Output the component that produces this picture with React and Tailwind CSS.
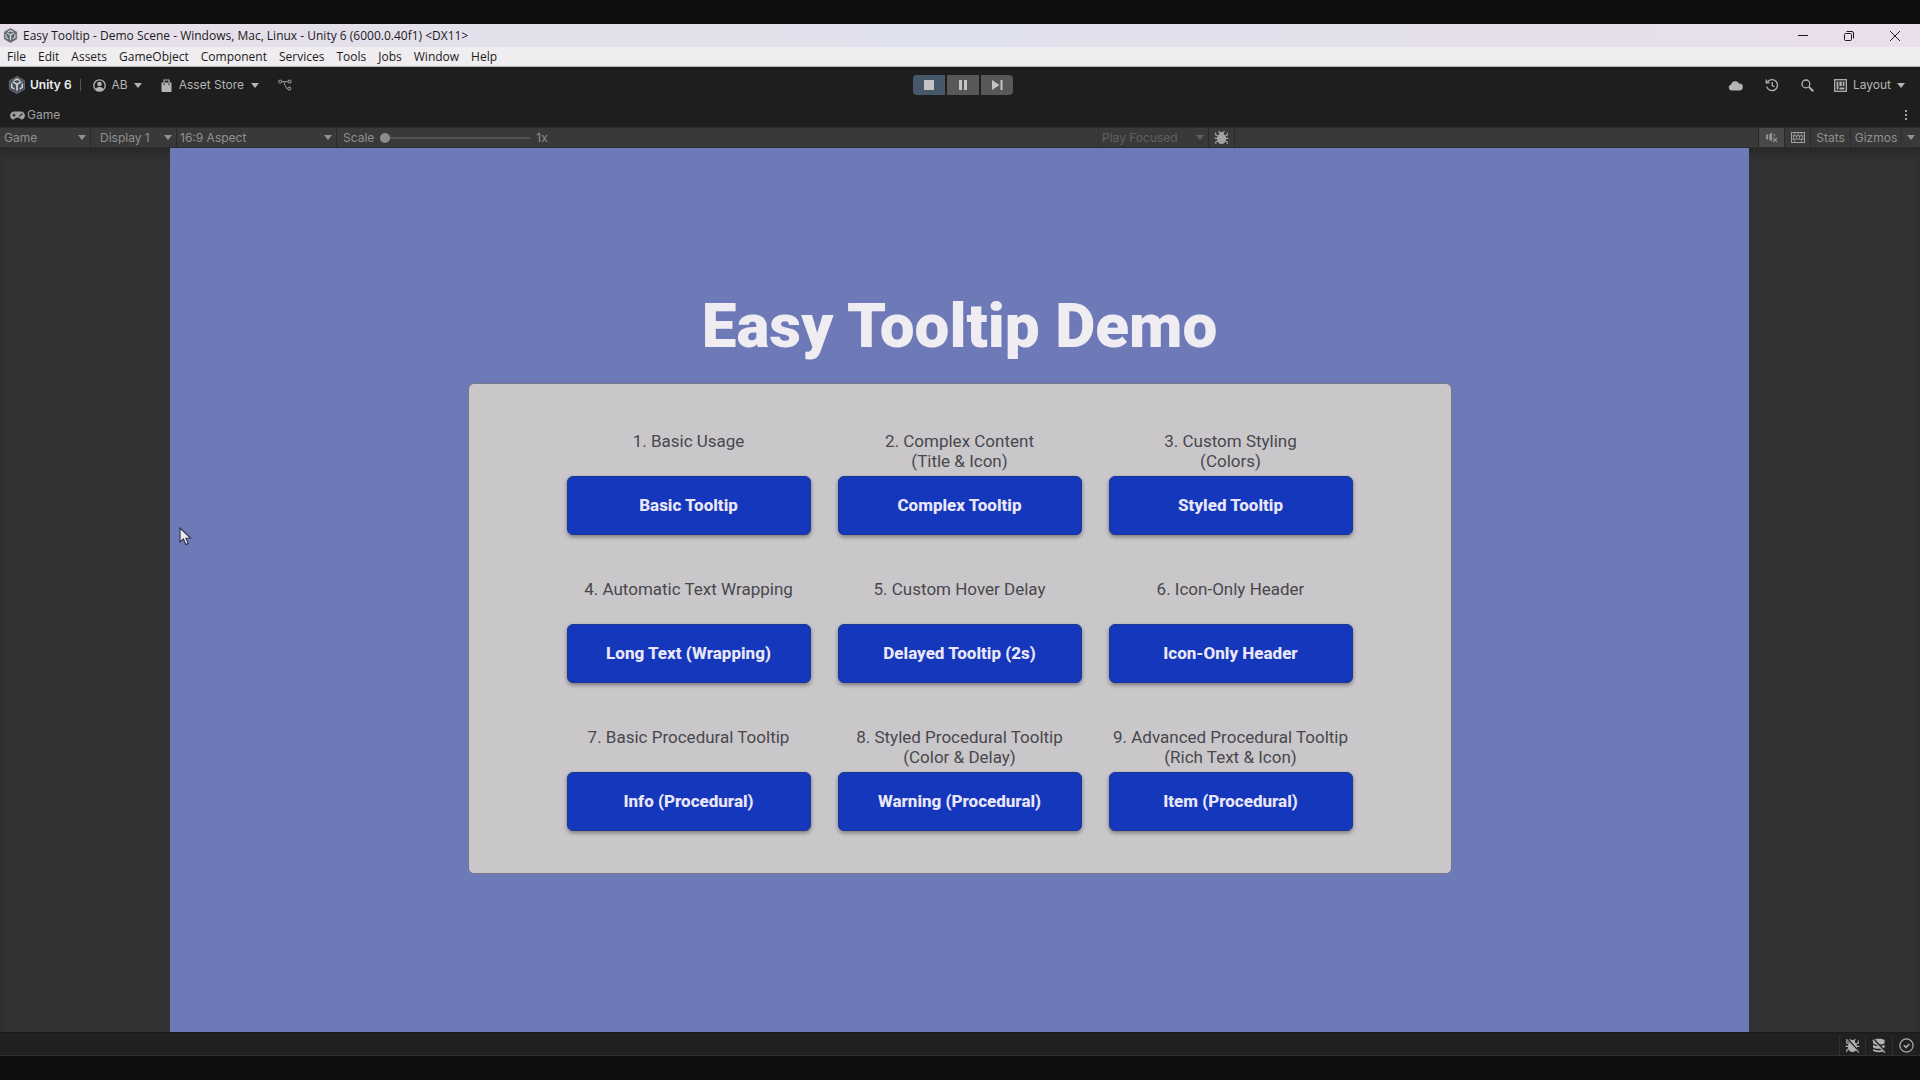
import React from "react";

const Caret = ({ className = "" }) => (
  <svg viewBox="0 0 8 5" className={`h-[5px] w-2 shrink-0 ${className}`} aria-hidden="true">
    <path d="M0 0h8L4 5z" fill="currentColor" />
  </svg>
);

const UnityCube = ({ className, face = "#4a525c", line = "#d4d8dd" }) => (
  <svg viewBox="0 0 18 18" className={className} aria-hidden="true">
    <path d="M9 .4 16.6 4.7v8.6L9 17.6 1.4 13.3V4.7z" fill={face} stroke="#7d8791" strokeWidth=".6" />
    <path d="M9 2.2 5.4 4.3l1.3.8L9 3.9l2.3 1.2 1.3-.8zM9 7.4 5.2 5.3 3.8 6.1 8.2 8.8v5l.8 1.9.8-1.9v-5l4.4-2.7-1.4-.8z" fill={line} />
    <path d="M3 7.2v4.6l3.4 2v-1.6l-2-1.2V8zM15 7.2v4.6l-3.4 2v-1.6l2-1.2V8z" fill={line} />
  </svg>
);

const UserIcon = () => (
  <svg viewBox="0 0 13 13" className="size-[13px]" aria-hidden="true">
    <circle cx="6.5" cy="6.5" r="5.7" fill="none" stroke="currentColor" strokeWidth="1.3" />
    <circle cx="6.5" cy="5" r="2.3" fill="currentColor" />
    <path d="M2.4 10.2C3.4 8.6 4.8 8 6.5 8s3.1.6 4.1 2.2a5.6 5.6 0 0 1-8.2 0z" fill="currentColor" />
  </svg>
);

const BagIcon = () => (
  <svg viewBox="0 0 11 13" className="h-[13px] w-[11px]" aria-hidden="true">
    <path d="M.5 3.6h10V12a1 1 0 0 1-1 1h-8a1 1 0 0 1-1-1z" fill="currentColor" />
    <path d="M3 3.5V1h5v2.5" fill="none" stroke="currentColor" strokeWidth="1.2" />
    <path d="M3 4.4v1.8M8 4.4v1.8" stroke="#1e1e1e" strokeWidth="1" />
  </svg>
);

const BranchIcon = () => (
  <svg viewBox="0 0 14 12" className="h-3 w-[14px]" fill="none" stroke="currentColor" strokeWidth="1.1" aria-hidden="true">
    <circle cx="2.2" cy="2.6" r="1.5" />
    <circle cx="11.6" cy="2.6" r="1.5" />
    <circle cx="11.4" cy="9.6" r="1.5" />
    <path d="M3.7 2.6h6.4M5.4 2.8c1.4 0 1.2 6.6 4.5 6.8" />
  </svg>
);

const GamepadIcon = () => (
  <svg viewBox="0 0 15 9" className="h-[9px] w-[15px]" aria-hidden="true">
    <path d="M4 .5h7a3.9 3.9 0 0 1 3.9 4C14.900 7 13.300 8.500 11.600 8.500c-1.300 0-1.800-1.700-2.700-1.700H6.100c-.9 0-1.400 1.700-2.700 1.700C1.700 8.500.1 7 .1 4.500A3.900 3.900 0 0 1 4 .5z" fill="currentColor" />
    <path d="M2.400 4.200h3.200M4 2.600v3.200" stroke="#1e1e1e" strokeWidth="1.100" />
    <path d="M9.200 5.400 12.400 2.800" stroke="#1e1e1e" strokeWidth="1.100" />
  </svg>
);

const BugIcon = ({ slashed = false, className = "size-[15px]" }) => (
  <svg viewBox="0 0 15 15" className={className} aria-hidden="true">
    <path d="M4.600 1 6 2.800M10.400 1 9 2.800M3.800 6 1.600 4.800V2.600M11.200 6l2.200-1.200V2.600M3.600 8.400H.6M11.400 8.400h3M3.800 10.800l-2 1v2.200M11.200 10.800l2 1v2.200" fill="none" stroke="currentColor" strokeWidth="1.100" />
    <ellipse cx="7.500" cy="3.800" rx="2.500" ry="2" fill="currentColor" />
    <ellipse cx="7.500" cy="8.800" rx="4.600" ry="5.300" fill="currentColor" />
    {slashed && (
      <>
        <path d="M2.200.6 14.200 14" stroke="#202020" strokeWidth="1.800" />
        <path d="M1.200 1 13.800 14.600" stroke="currentColor" strokeWidth="1.100" />
      </>
    )}
  </svg>
);

const CacheIcon = () => (
  <svg viewBox="0 0 14 15" className="h-[15px] w-[14px]" aria-hidden="true">
    <path d="M1 2.600C1 .2 12.600.2 12.600 2.600V5C12 7.200 1.600 7.200 1 5zM1 6.800c2 1.900 9.600 1.900 11.600 0v2.400c-1 2-10.600 2-11.600 0zM1 11c2 1.900 9.600 1.900 11.600 0v1.600c-1 2.200-10.600 2.200-11.600 0z" fill="currentColor" />
    <path d="M2 1.600 13.600 14" stroke="#202020" strokeWidth="1.800" />
    <path d="M.8 2 13 14.600" stroke="currentColor" strokeWidth="1.100" />
  </svg>
);

const CheckIcon = () => (
  <svg viewBox="0 0 15 15" className="size-[15px]" fill="none" stroke="currentColor" strokeWidth="1.200" aria-hidden="true">
    <circle cx="7.500" cy="7.500" r="6.600" />
    <path d="M4.800 7.300 7 9.400l3.400-3.400" strokeWidth="1.500" />
  </svg>
);

const CloudIcon = () => (
  <svg viewBox="0 0 15 11" className="h-[11px] w-[15px]" aria-hidden="true">
    <path d="M3.600 10.600a3.100 3.100 0 0 1-.5-6.100A4.200 4.200 0 0 1 11 3.600a3.500 3.500 0 0 1 .6 7z" fill="currentColor" />
  </svg>
);

const HistoryIcon = () => (
  <svg viewBox="0 0 14 14" className="size-[14px]" fill="none" stroke="currentColor" strokeWidth="1.300" aria-hidden="true">
    <path d="M2.300 4.200A5.500 5.500 0 1 1 1.700 8.600" />
    <path d="M1.300 1.600v3.200h3.200M7.200 4v3.600l2.200 1.200" />
  </svg>
);

const SearchIcon = () => (
  <svg viewBox="0 0 13 13" className="size-[13px]" fill="none" stroke="currentColor" aria-hidden="true">
    <circle cx="4.900" cy="4.900" r="3.900" strokeWidth="1.300" />
    <path d="M7.900 7.900 12.200 12.200" strokeWidth="2" />
  </svg>
);

const LayoutIcon = () => (
  <svg viewBox="0 0 13 13" className="size-[13px]" aria-hidden="true">
    <rect x=".7" y=".7" width="11.600" height="11.600" fill="none" stroke="currentColor" strokeWidth="1.300" />
    <path d="M2.600 2.600h1.800v7.900H2.600zM5.400 2.600h2.300v4.600H5.400zM5.400 8.400h5v2.100h-5zM8.700 2.600h1.700v4.600H8.700z" fill="currentColor" />
  </svg>
);

const MuteIcon = () => (
  <svg viewBox="0 0 12 11" className="h-[11px] w-3" aria-hidden="true">
    <path d="M0 2.500h2v5H0zM3 2.500 6.200.3v9.400L3 7.500z" fill="currentColor" />
    <path d="M7.600 2.200c.8.400 1.200 1.200 1.200 2.200M7.200 6l3.800 4M11 6l-3.800 4" fill="none" stroke="currentColor" strokeWidth="1.100" />
  </svg>
);

const KeyboardIcon = () => (
  <svg viewBox="0 0 14 11" className="h-[11px] w-[14px]" fill="none" stroke="currentColor" aria-hidden="true">
    <rect x=".5" y=".5" width="13" height="10" />
    <path d="M.5 3.800h13M.5 7.200h13M3.700.5v3.300M7 .5v3.300M10.300.5v3.300M2.600 3.800v3.400M5.500 3.800v3.400M8.500 3.800v3.400M11.400 3.800v3.400M3.700 7.200v3.300M10.300 7.200v3.300" strokeWidth=".8" />
  </svg>
);

const MENUS = ["File", "Edit", "Assets", "GameObject", "Component", "Services", "Tools", "Jobs", "Window", "Help"];

const DEMOS = [
  { label: ["1. Basic Usage"], action: "Basic Tooltip" },
  { label: ["2. Complex Content", "(Title & Icon)"], action: "Complex Tooltip" },
  { label: ["3. Custom Styling", "(Colors)"], action: "Styled Tooltip" },
  { label: ["4. Automatic Text Wrapping"], action: "Long Text (Wrapping)" },
  { label: ["5. Custom Hover Delay"], action: "Delayed Tooltip (2s)" },
  { label: ["6. Icon-Only Header"], action: "Icon-Only Header" },
  { label: ["7. Basic Procedural Tooltip"], action: "Info (Procedural)" },
  { label: ["8. Styled Procedural Tooltip", "(Color & Delay)"], action: "Warning (Procedural)" },
  { label: ["9. Advanced Procedural Tooltip", "(Rich Text & Icon)"], action: "Item (Procedural)" },
];

function ToolbarSelect({ label, value, className }) {
  return (
    <div className={`relative flex h-full items-center border-r border-[#292929] ${className}`}>
      <select aria-label={label} className="size-full appearance-none bg-transparent outline-none" defaultValue={value}>
        <option>{value}</option>
      </select>
      <Caret className="pointer-events-none absolute right-1" />
    </div>
  );
}

function WindowChrome() {
  return (
    <header className="font-['Open_Sans','Noto_Sans',sans-serif] text-[12px] text-[#1c1a20]">
      <div className="flex h-[23px] items-center bg-linear-to-r from-[#e6dfea] via-[#dfe1ec] to-[#eadfec]">
        <UnityCube className="mx-[3px] size-[15px] shrink-0" face="#5c666f" />
        <h1 className="ml-0.5 grow">Easy Tooltip - Demo Scene - Windows, Mac, Linux - Unity 6 (6000.0.40f1) &lt;DX11&gt;</h1>
        <div className="flex gap-8 pr-[18px]">
          <button aria-label="Minimize" className="flex size-[14px] items-center justify-center">
            <svg viewBox="0 0 10 10" className="size-[10px]" stroke="currentColor"><path d="M0 4.500h10" /></svg>
          </button>
          <button aria-label="Restore" className="flex size-[14px] items-center justify-center">
            <svg viewBox="0 0 10 10" className="size-[10px]" fill="none" stroke="currentColor">
              <rect x=".5" y="2.500" width="7" height="7" rx="1" />
              <path d="M2.500.5H8A1.500 1.500 0 0 1 9.500 2v5.500" />
            </svg>
          </button>
          <button aria-label="Close" className="flex size-[14px] items-center justify-center">
            <svg viewBox="0 0 10 10" className="size-[10px]" stroke="currentColor"><path d="M0 0l10 10M10 0 0 10" /></svg>
          </button>
        </div>
      </div>
      <nav className="flex h-5 items-center gap-3 border-b border-[#b5b5b5] bg-[#efedf0] px-[7px]">
        {MENUS.map((m) => (
          <button key={m}>{m}</button>
        ))}
      </nav>
    </header>
  );
}

function MainToolbar() {
  return (
    <div className="grid h-[36px] grid-cols-[1fr_auto_1fr] items-center text-[12px] text-[#b4b4b4]">
      <div className="flex items-center">
        <UnityCube className="ml-2 size-[18px]" />
        <span className="ml-1 font-semibold text-[#eeeeee]">Unity 6</span>
        <span className="ml-2 h-3 w-px bg-[#555555]" />
        <button className="ml-3 flex items-center gap-[6px]">
          <UserIcon />
          AB
          <Caret />
        </button>
        <button className="ml-[19px] flex items-center gap-[7px]">
          <BagIcon />
          Asset Store
          <Caret />
        </button>
        <button aria-label="Version control" className="ml-[19px] text-[#8a8a8a]">
          <BranchIcon />
        </button>
      </div>
      <div className="ml-[6px] flex gap-0.5 text-[#c4c4c4]">
        <button aria-label="Stop" className="flex h-5 w-8 items-center justify-center rounded-l bg-[#46586a]">
          <span className="size-[10px] bg-current" />
        </button>
        <button aria-label="Pause" className="flex h-5 w-8 items-center justify-center gap-0.5 bg-[#585858]">
          <span className="h-[10px] w-[3px] bg-current" />
          <span className="h-[10px] w-[3px] bg-current" />
        </button>
        <button aria-label="Step" className="flex h-5 w-8 items-center justify-center rounded-r bg-[#585858]">
          <svg viewBox="0 0 11 10" className="h-[10px] w-[11px]" fill="currentColor"><path d="M0 0l7.500 5L0 10zM8.500 0h2v10h-2z" /></svg>
        </button>
      </div>
      <div className="flex items-center justify-end pr-[15px]">
        <button aria-label="Cloud" className="mr-[22px]"><CloudIcon /></button>
        <button aria-label="History" className="mr-[22px]"><HistoryIcon /></button>
        <button aria-label="Search" className="mr-5"><SearchIcon /></button>
        <button className="flex items-center gap-[6px]">
          <LayoutIcon />
          Layout
          <Caret />
        </button>
      </div>
    </div>
  );
}

function GameToolbar() {
  return (
    <div className="grid h-[21px] grid-cols-[1fr_auto_1fr] items-stretch border-t border-b border-[#2c2c2c] bg-[#393939] text-[12px] text-[#909090]">
      <div className="flex items-center">
        <ToolbarSelect label="View" value="Game" className="w-[91px] pl-1" />
        <ToolbarSelect label="Display" value="Display 1" className="w-[86px] pl-[9px]" />
        <ToolbarSelect label="Aspect" value="16:9 Aspect" className="w-40 pl-[3px]" />
        <label htmlFor="scale" className="ml-[6px]">Scale</label>
        <input
          id="scale"
          type="range"
          min="1"
          max="5"
          defaultValue="1"
          className="ml-[6px] h-3 w-[150px] appearance-none bg-transparent [&::-webkit-slider-runnable-track]:h-0.5 [&::-webkit-slider-runnable-track]:bg-[#545454] [&::-webkit-slider-thumb]:-mt-1 [&::-webkit-slider-thumb]:size-[10px] [&::-webkit-slider-thumb]:appearance-none [&::-webkit-slider-thumb]:rounded-full [&::-webkit-slider-thumb]:bg-[#8c8c8c]"
        />
        <output htmlFor="scale" className="ml-[6px]">1x</output>
      </div>
      <div />
      <div className="flex items-stretch">
        <div className="ml-[138px] flex items-stretch border-l border-[#303030]">
          <ToolbarSelect label="Play mode" value="Play Focused" className="w-[110px] pl-[3px] text-[#606060]" />
          <button aria-label="Debug" className="flex w-[26px] items-center justify-center border-r border-[#292929] text-[#a4a4a4]">
            <BugIcon />
          </button>
        </div>
        <div className="grow border-r border-[#292929]" />
        <button aria-label="Mute audio" className="flex w-[26px] items-center justify-center border-r border-[#292929] bg-[#484848]">
          <MuteIcon />
        </button>
        <button aria-label="Shortcuts" className="flex w-[26px] items-center justify-center border-r border-[#292929] text-[#a0a0a0]">
          <KeyboardIcon />
        </button>
        <button className="w-10 border-r border-[#292929]">Stats</button>
        <button className="w-[51px] border-r border-[#303030]">Gizmos</button>
        <button aria-label="Gizmo options" className="flex w-[18px] items-center justify-center"><Caret /></button>
      </div>
    </div>
  );
}

function GameView() {
  return (
    <main className="flex grow flex-col bg-[#323232] pr-[171px] pl-[170px] shadow-[inset_0_8px_8px_-4px_#262626]">
      <div className="relative flex grow flex-col items-center justify-center bg-[#6d7ab7] pb-4 font-[Roboto,sans-serif]">
        <h2 className="text-center text-[62px] leading-[72px] font-black text-[#efecf2]">Easy Tooltip Demo</h2>
        <section className="mt-[21px] grid w-full max-w-[984px] grid-cols-3 gap-x-[27px] gap-y-11 rounded-md border border-[#757789] bg-[#cac7cb] px-[98px] pt-[47px] pb-[42px]">
          {DEMOS.map(({ label, action }) => (
            <div key={action} className="flex flex-col gap-[5px]">
              <p className="-mx-3 h-10 text-center text-[17px] leading-5 text-[#48474c]">
                {label.map((line) => (
                  <span key={line} className="block">{line}</span>
                ))}
              </p>
              <button className="h-[59px] rounded-md border border-[#1b3593] bg-[#1437bb] pt-px text-[17px] font-extrabold text-[#e9e6f8] shadow-[0_2px_4px_rgba(0,0,0,0.4)]">
                {action}
              </button>
            </div>
          ))}
        </section>
        <svg viewBox="0 0 14 19" className="absolute top-[379px] left-[9px] h-[19px] w-[14px]" aria-hidden="true">
          <path d="M1 1v14l3.400-3 2.400 5.600 2.400-1L6.900 11.200l4.700-.2z" fill="#e8e8f0" stroke="#2e3046" strokeWidth="1.100" />
        </svg>
      </div>
    </main>
  );
}

export default function App() {
  return (
    <div className="flex min-h-screen flex-col bg-[#0e0e0e] py-6">
      <WindowChrome />
      <div className="flex grow flex-col bg-[#1e1e1e] font-[Inter,sans-serif]">
        <MainToolbar />
        <div className="flex h-6 items-center justify-between pr-[13px] pl-[10px] text-[12px] text-[#a0a0a0]">
          <button className="flex items-center gap-0.5">
            <GamepadIcon />
            Game
          </button>
          <button aria-label="Tab options" className="flex flex-col gap-0.5">
            <span className="size-0.5 bg-current" />
            <span className="size-0.5 bg-current" />
            <span className="size-0.5 bg-current" />
          </button>
        </div>
        <GameToolbar />
        <GameView />
        <footer className="flex h-6 items-stretch justify-end border-t border-b border-t-[#191919] border-b-[#303030] bg-[#202020] pt-[3px] text-[#b0b0b0]">
          <button aria-label="Debugger disabled" className="flex w-[26px] items-center justify-center border-l border-[#2e2e2e]"><BugIcon slashed /></button>
          <button aria-label="Cache server disabled" className="flex w-[27px] items-center justify-center border-l border-[#2e2e2e]"><CacheIcon /></button>
          <button aria-label="Background tasks" className="flex w-[28px] items-center justify-center border-l border-[#2e2e2e]"><CheckIcon /></button>
        </footer>
      </div>
    </div>
  );
}
